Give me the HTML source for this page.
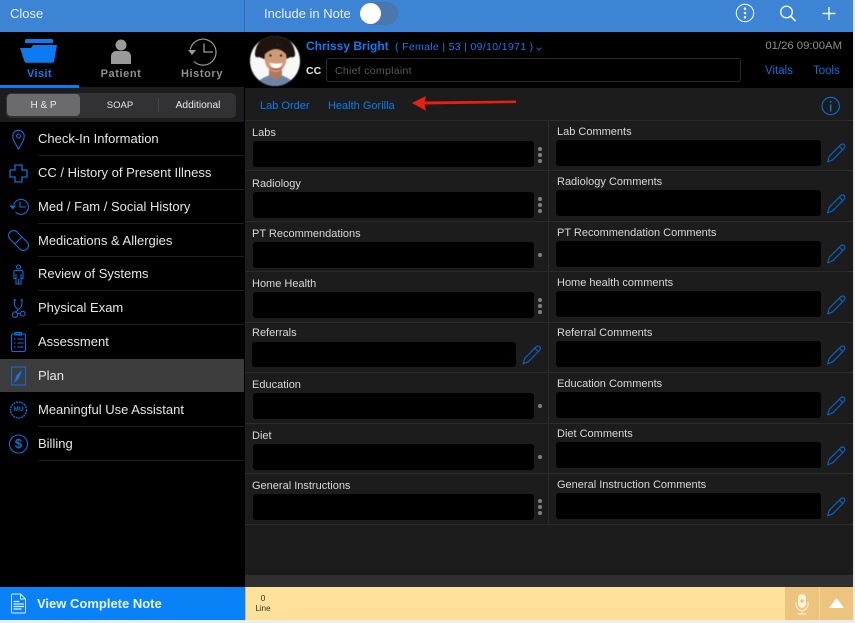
<!DOCTYPE html>
<html><head><meta charset="utf-8"><style>
*{box-sizing:border-box}
html,body{margin:0;padding:0;width:855px;height:623px;overflow:hidden;background:#ececec;font-family:"Liberation Sans",sans-serif}
.a{position:absolute;white-space:nowrap}
svg{position:absolute;overflow:visible}
.m{left:38px;font-size:13px;color:#e6e6e6;line-height:16px}
.s{left:38px;width:206px;height:1px;background:#1e1e1e}
.l{font-size:11px;color:#d8d8d8;line-height:13px;margin-top:1px}
.b{background:#000;border-radius:3px}
.h{height:1px;background:#2b2b2b;left:245px;width:608px}
.d{width:3.5px;height:3.5px;border-radius:50%;background:#7d7d7d;left:538px}
</style></head><body>
<div class="a" style="left:0;top:0;width:853px;height:620px;background:#000"></div>
<div class="a" style="left:0;top:0;width:853px;height:32px;background:#3d84d5"></div>
<div class="a" style="left:10px;top:6px;font-size:13px;line-height:15px;color:#e8f0fa">Close</div>
<div class="a" style="left:244px;top:0;width:1px;height:32px;background:#2f6cb3"></div>
<div class="a" style="left:264px;top:6px;font-size:13px;line-height:15px;color:#e8f0fa">Include in Note</div>
<div class="a" style="left:360px;top:2px;width:38px;height:23px;border-radius:12px;background:#4a77ad"></div>
<div class="a" style="left:360px;top:3px;width:21px;height:21px;border-radius:50%;background:#fff"></div>
<svg style="left:0;top:0" width="853" height="32" fill="none" stroke="#f0f5fb">
<circle cx="745" cy="13" r="8.7" stroke-width="1.1"/><circle cx="745" cy="8.7" r="1.3" fill="#f0f5fb" stroke="none"/><circle cx="745" cy="13" r="1.3" fill="#f0f5fb" stroke="none"/><circle cx="745" cy="17.3" r="1.3" fill="#f0f5fb" stroke="none"/>
<circle cx="786.5" cy="12" r="5.8" stroke-width="1.4"/><path d="M791 16.5l4.5 4.5" stroke-width="1.6"/>
<path d="M829 7v13M822.5 13.5h13" stroke-width="1.4"/></svg>

<!-- tabs -->
<svg style="left:0;top:33px" width="244" height="55">
<path d="M25 7.5a1.5 1.5 0 0 1 1.5-1.500h25a1.500 1.500 0 0 1 1.500 1.500V10H25z" fill="#0a7bf0"/>
<path d="M20 15h11l2-3h24l-3 16.500a1.500 1.500 0 0 1-1.500 1.200H26a1.500 1.500 0 0 1-1.500-1.200z" fill="#0a7bf0"/>
<circle cx="121" cy="12" r="5.500" fill="#9a9a9a"/>
<path d="M111 31V23a5 5 0 0 1 5-5h10a5 5 0 0 1 5 5v8z" fill="#9a9a9a"/>
<path d="M190.300 16.500A13 13 0 1 1 194 28.500" fill="none" stroke="#9a9a9a" stroke-width="1.200"/>
<path d="M188 17h8l-4 5z" fill="#9a9a9a"/><path d="M204 10.500v8.500h9" fill="none" stroke="#9a9a9a" stroke-width="1.300"/>
</svg>
<div class="a" style="left:0;width:79px;top:68px;text-align:center;font-size:11px;font-weight:bold;color:#0a7bf0;letter-spacing:.4px">Visit</div>
<div class="a" style="left:81px;width:80px;top:68px;text-align:center;font-size:11px;font-weight:bold;color:#8f8f8f;letter-spacing:.6px">Patient</div>
<div class="a" style="left:162px;width:80px;top:68px;text-align:center;font-size:11px;font-weight:bold;color:#8f8f8f;letter-spacing:.6px">History</div>
<div class="a" style="left:0;top:85px;width:79px;height:3px;background:#0a7bf0"></div>
<div class="a" style="left:79px;top:87px;width:165px;height:1px;background:#1c1c1c"></div>
<div class="a" style="left:0;top:88px;width:244px;height:34px;background:#1c1c1e"></div>
<div class="a" style="left:6px;top:93px;width:230px;height:25px;border-radius:5px;background:#323234"></div>
<div class="a" style="left:7px;top:94px;width:73px;height:22px;border-radius:4px;background:#6b6b6e"></div>
<div class="a" style="left:158px;top:98px;width:1px;height:14px;background:#47474a"></div>
<div class="a" style="left:7px;width:73px;top:100px;text-align:center;font-size:10px;line-height:12px;color:#e8e8e8">H &amp; P</div>
<div class="a" style="left:80px;width:80px;top:100px;text-align:center;font-size:9.500px;line-height:12px;color:#e8e8e8">SOAP</div>
<div class="a" style="left:158px;width:80px;top:100px;text-align:center;font-size:10.200px;line-height:12px;color:#e8e8e8">Additional</div>

<!-- menu -->
<div class="a" style="left:0;top:359px;width:244px;height:33px;background:#3c3c3c"></div>
<div class="a m" style="top:131px">Check-In Information</div><div class="a s" style="top:155px"></div>
<div class="a m" style="top:165px">CC / History of Present Illness</div><div class="a s" style="top:189px"></div>
<div class="a m" style="top:199px">Med / Fam / Social History</div><div class="a s" style="top:223px"></div>
<div class="a m" style="top:233px">Medications &amp; Allergies</div><div class="a s" style="top:256px"></div>
<div class="a m" style="top:266px">Review of Systems</div><div class="a s" style="top:290px"></div>
<div class="a m" style="top:300px">Physical Exam</div><div class="a s" style="top:324px"></div>
<div class="a m" style="top:334px">Assessment</div>
<div class="a m" style="top:368px">Plan</div>
<div class="a m" style="top:402px">Meaningful Use Assistant</div><div class="a s" style="top:426px"></div>
<div class="a m" style="top:436px">Billing</div><div class="a s" style="top:460px"></div>
<svg style="left:0;top:0" width="40" height="470" fill="none" stroke="#0a6fd8" stroke-width="1.100">
<path d="M18.500 149c-3-5.500-5.700-8.500-5.700-13a5.700 5.700 0 0 1 11.400 0c0 4.500-2.700 7.500-5.700 13z"/><circle cx="18.500" cy="136" r="2"/>
<path d="M15 165h7v5h5v7h-5v5h-7v-5h-5v-7h5z" stroke-width="1.300"/>
<path d="M13.700 205A7.500 7.500 0 1 1 15.500 212"/><path d="M9.500 205.500h6.500l-3.200 4z" fill="#0a6fd8" stroke="none"/><path d="M20 201.500v5.500h6"/>
<g transform="rotate(45 18.500 240.500)"><rect x="6.500" y="235.500" width="24" height="10" rx="5"/><path d="M18.500 235.500v10"/></g>
<circle cx="18.500" cy="267" r="2"/><path d="M15.500 270.500c-1 0-1.500 1-1.500 2v6h2v5.500h5v-5.500h2v-6c0-1-.5-2-1.500-2zM16 274v4.500M21 274v4.500M18.500 279v5"/>
<path d="M14.700 300c-.5 3-.5 5 .5 6.500s2 2.500 3 2.500 2-1 3-2.500 1-3.500.5-6.500M18.200 309c0 1-1 2-3 3M17.500 313.500h3"/><circle cx="15" cy="314.700" r="2.700"/><circle cx="22.700" cy="313.700" r="2.400"/>
<path d="M13.500 300h2.500M20.500 300h2.500" stroke-width="1.300"/>
<rect x="11.500" y="334" width="14" height="17.500" rx="1.500"/><rect x="15" y="332.500" width="6.500" height="2.500"/><path d="M14 339h1.500M14 343h1.500M14 347h1.500M17.500 339h6M17.500 343h6M17.500 347h6" stroke-width="1"/>
<rect x="11.500" y="367" width="14" height="18" stroke-width="1"/><path d="M14 383l2.500-7.500 6-6-4 9.500z" fill="#0a7bf0" stroke="none"/>
<circle cx="18.500" cy="410" r="8" stroke-dasharray="1.800 .9" stroke-width="1.500"/>
<circle cx="18.500" cy="444" r="9"/>
</svg>
<div class="a" style="left:12px;top:406px;width:13px;text-align:center;font-size:6.500px;line-height:8px;font-weight:bold;color:#0a6fd8">MU</div>
<div class="a" style="left:12px;top:437px;width:13px;text-align:center;font-size:13px;line-height:14px;font-weight:bold;color:#0a6fd8">$</div>

<!-- patient header -->
<div class="a" style="left:245px;top:33px;width:608px;height:55px;background:#000"></div>
<svg style="left:250px;top:36px;filter:blur(.6px)" width="50" height="50" viewBox="0 0 50 50">
<defs><clipPath id="c"><circle cx="25" cy="25" r="25"/></clipPath></defs>
<g clip-path="url(#c)"><rect width="50" height="50" fill="#f8f8f8"/>
<path d="M5 17C6 6 15-2 25-2s19 8 20 19c.5 4-2 5-4 4l-5 2H14l-5-2c-2 1-4.500 0-4-4z" fill="#1d1410"/>
<path d="M5 52c1-8 10-11 15-13h11c5 2 13 5 15 13z" fill="#6f82a8"/>
<path d="M19 32h13v7l-6 5-7-5z" fill="#b07a58"/>
<ellipse cx="25.500" cy="22" rx="11" ry="14" fill="#cf9a78"/>
<path d="M14 19c1-8 7-11 11-11s11 3 12 11c-4-4-7-6-11-6s-8 2-12 6z" fill="#1d1410"/>
<path d="M19.500 26.500c3 1.500 10.500 1.500 13 0-.8 4.500-3.500 6-6.500 6s-5.700-1.500-6.500-6z" fill="#fff"/>
<path d="M26 34c-3 0-5.500-1-6.500-3.500 2.500 2.500 10.500 2.500 13 0-1 2.500-3.500 3.500-6.500 3.500z" fill="#b0514a"/>
<circle cx="20.500" cy="19.500" r="1.100" fill="#201310"/><circle cx="31" cy="19.500" r="1.100" fill="#201310"/></g></svg>
<div class="a" style="left:306px;top:39px;font-size:12px;line-height:15px;font-weight:bold;color:#0a7bf0">Chrissy Bright</div>
<div class="a" style="left:395px;top:40px;font-size:10.500px;line-height:14px;color:#0a7bf0;letter-spacing:.33px">( Female | 53 | 09/10/1971 )</div>
<svg style="left:535.500px;top:47px" width="6" height="4" fill="none" stroke="#0a6fd8" stroke-width=".9"><path d="M.7 .7l2.300 2.300 2.300-2.300"/></svg>
<div class="a" style="left:306px;top:64px;font-size:10.500px;line-height:14px;font-weight:bold;color:#e8e8e8">CC</div>
<div class="a" style="left:326px;top:58px;width:415px;height:24px;border:1px solid #2a2a2a;border-radius:3px;background:#000"></div>
<div class="a" style="left:335px;top:64px;font-size:10.500px;line-height:14px;color:#5a5a5a;letter-spacing:.3px">Chief complaint</div>
<div class="a" style="right:13px;top:39px;font-size:11.300px;line-height:14px;color:#8e8e8e">01/26 09:00AM</div>
<div class="a" style="left:765px;top:64px;font-size:11.500px;line-height:14px;color:#0a6fd8">Vitals</div>
<div class="a" style="left:813px;top:64px;font-size:11.500px;line-height:14px;color:#0a6fd8">Tools</div>

<!-- content -->
<div class="a" style="left:245px;top:88px;width:608px;height:487px;background:#1c1c1c"></div>
<div class="a" style="left:245px;top:575px;width:608px;height:12px;background:#2f2f2f"></div>
<div class="a" style="left:260px;top:99px;font-size:11px;line-height:14px;color:#0a7bf0">Lab Order</div>
<div class="a" style="left:328px;top:99px;font-size:11px;line-height:14px;color:#0a7bf0">Health Gorilla</div>
<svg style="left:411px;top:95px" width="110" height="18"><path d="M1 8L15 1l-1.500 5.500L105 5.500V8l-91.500 1.500L15 15.700z" fill="#e8200f"/></svg>
<svg style="left:820px;top:96px" width="22" height="20" fill="none" stroke="#0a6fd8"><circle cx="10.700" cy="10" r="8.700" stroke-width="1.100"/><circle cx="10.700" cy="5.800" r="1" fill="#0a6fd8" stroke="none"/><path d="M10.700 8.500v7" stroke-width="1.500"/></svg>

<div class="a" style="left:548px;top:120px;width:1px;height:405px;background:#2b2b2b"></div>
<div class="a h" style="top:120px"></div><div class="a h" style="top:170px"></div><div class="a h" style="top:221px"></div><div class="a h" style="top:271px"></div><div class="a h" style="top:322px"></div><div class="a h" style="top:372px"></div><div class="a h" style="top:423px"></div><div class="a h" style="top:473px"></div><div class="a h" style="top:524px"></div>

<div class="a l" style="left:252px;top:126px">Labs</div><div class="a b" style="left:253px;top:141px;width:281px;height:26px"></div>
<div class="a l" style="left:252px;top:177px">Radiology</div><div class="a b" style="left:253px;top:192px;width:281px;height:26px"></div>
<div class="a l" style="left:252px;top:227px">PT Recommendations</div><div class="a b" style="left:253px;top:242px;width:281px;height:26px"></div>
<div class="a l" style="left:252px;top:277px">Home Health</div><div class="a b" style="left:253px;top:292px;width:281px;height:26px"></div>
<div class="a l" style="left:252px;top:326px">Referrals</div><div class="a b" style="left:252px;top:342px;width:264px;height:25px"></div>
<div class="a l" style="left:252px;top:378px">Education</div><div class="a b" style="left:253px;top:393px;width:281px;height:26px"></div>
<div class="a l" style="left:252px;top:429px">Diet</div><div class="a b" style="left:253px;top:444px;width:281px;height:26px"></div>
<div class="a l" style="left:252px;top:479px">General Instructions</div><div class="a b" style="left:253px;top:494px;width:281px;height:26px"></div>

<div class="a l" style="left:557px;top:125px">Lab Comments</div><div class="a b" style="left:556px;top:140px;width:265px;height:26px"></div>
<div class="a l" style="left:557px;top:175px">Radiology Comments</div><div class="a b" style="left:556px;top:190px;width:265px;height:26px"></div>
<div class="a l" style="left:557px;top:226px">PT Recommendation Comments</div><div class="a b" style="left:556px;top:241px;width:265px;height:26px"></div>
<div class="a l" style="left:557px;top:276px">Home health comments</div><div class="a b" style="left:556px;top:291px;width:265px;height:26px"></div>
<div class="a l" style="left:557px;top:326px">Referral Comments</div><div class="a b" style="left:556px;top:341px;width:265px;height:26px"></div>
<div class="a l" style="left:557px;top:377px">Education Comments</div><div class="a b" style="left:556px;top:392px;width:265px;height:26px"></div>
<div class="a l" style="left:557px;top:427px">Diet Comments</div><div class="a b" style="left:556px;top:442px;width:265px;height:26px"></div>
<div class="a l" style="left:557px;top:478px">General Instruction Comments</div><div class="a b" style="left:556px;top:493px;width:265px;height:26px"></div>

<div class="a d" style="top:147px"></div><div class="a d" style="top:153px"></div><div class="a d" style="top:159px"></div>
<div class="a d" style="top:197px"></div><div class="a d" style="top:203px"></div><div class="a d" style="top:209px"></div>
<div class="a d" style="top:253px"></div>
<div class="a d" style="top:298px"></div><div class="a d" style="top:304px"></div><div class="a d" style="top:310px"></div>
<div class="a d" style="top:404px"></div>
<div class="a d" style="top:455px"></div>
<div class="a d" style="top:499px"></div><div class="a d" style="top:505px"></div><div class="a d" style="top:511px"></div>

<svg style="left:0;top:0" width="853" height="530" fill="none" stroke="#0a62c4" stroke-width="1.150" stroke-linejoin="round">
<defs><path id="p" d="M.6 18.900l1.700-5.700L13.800 1.700a2.400 2.400 0 0 1 3.400 0 2.400 2.400 0 0 1 0 3.400L5.800 16.800zM12.300 3.200l3.400 3.400"/></defs>
<use href="#p" x="827" y="143"/><use href="#p" x="827" y="194"/><use href="#p" x="827" y="244"/><use href="#p" x="827" y="295"/><use href="#p" x="827" y="345"/><use href="#p" x="827" y="396"/><use href="#p" x="827" y="446"/><use href="#p" x="827" y="497"/><use href="#p" x="522.500" y="345"/>
</svg>

<!-- bottom -->
<div class="a" style="left:0;top:587px;width:245px;height:33px;background:#0a82f7"></div>
<svg style="left:10px;top:593px" width="18" height="22" fill="none" stroke="#dcecff" stroke-width="1"><path d="M1.500 2a1 1 0 0 1 1-1h8l5 5v13a1 1 0 0 1-1 1h-12a1 1 0 0 1-1-1zM10.500 1v5h5"/><path d="M3.500 8.500h6M3.500 11h10.500M3.500 13.500h10.500M3.500 16h8" stroke-width="1.200"/></svg>
<div class="a" style="left:37px;top:596px;font-size:13px;line-height:15px;font-weight:bold;color:#e8f3ff">View Complete Note</div>
<div class="a" style="left:245px;top:587px;width:540px;height:33px;background:#fde19a"></div>
<div class="a" style="left:245px;top:587px;width:1px;height:33px;background:#d8b670"></div>
<div class="a" style="left:785px;top:587px;width:34px;height:33px;background:#edc47e"></div>
<div class="a" style="left:820px;top:587px;width:33px;height:33px;background:#edc47e"></div>
<div class="a" style="left:819px;top:587px;width:1px;height:33px;background:#f5d592"></div>
<div class="a" style="left:245px;width:36px;top:593px;text-align:center;font-size:8.500px;line-height:10px;color:#333">0</div>
<div class="a" style="left:245px;width:36px;top:604px;text-align:center;font-size:8px;line-height:10px;color:#333">Line</div>
<svg style="left:790px;top:593px" width="24" height="24" fill="none" stroke="#fff3d6"><rect x="8" y="1" width="8" height="14" rx="4" fill="#fff3d6" stroke="none"/><path d="M6 9v2.500a6 6 0 0 0 12 0V9M12 17.500v3M7.500 21h9" stroke-width="1"/><path d="M12 6v4M10 8h4" stroke="#d9a65a" stroke-width=".8"/></svg>
<svg style="left:828px;top:597px" width="17" height="13"><path d="M8.500 1L16 11H1z" fill="#fff"/></svg>
</body></html>
